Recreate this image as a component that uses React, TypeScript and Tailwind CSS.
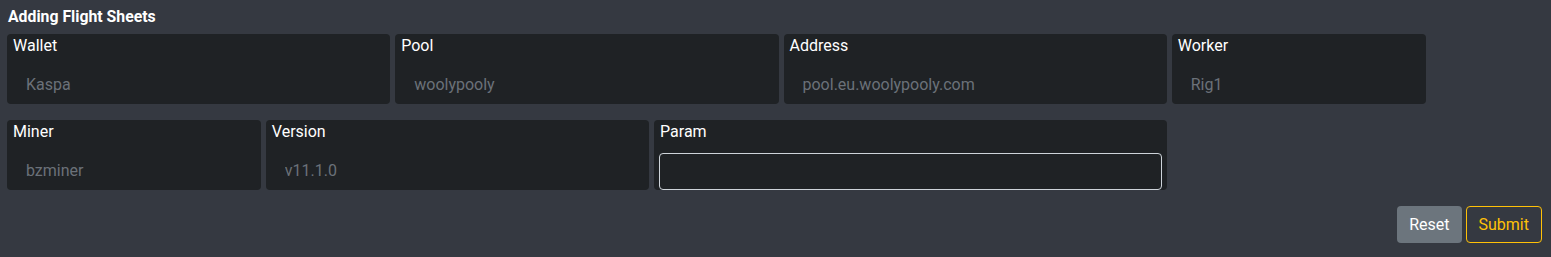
import React from 'react'

type Field = {
  label: string
  value?: string
  span: string
  editable?: boolean
}

const rowOne: Field[] = [
  { label: 'Wallet', value: 'Kaspa', span: 'col-span-3' },
  { label: 'Pool', value: 'woolypooly', span: 'col-span-3' },
  { label: 'Address', value: 'pool.eu.woolypooly.com', span: 'col-span-3' },
  { label: 'Worker', value: 'Rig1', span: 'col-span-2' },
]

const rowTwo: Field[] = [
  { label: 'Miner', value: 'bzminer', span: 'col-span-2' },
  { label: 'Version', value: 'v11.1.0', span: 'col-span-3' },
  { label: 'Param', span: 'col-span-4', editable: true },
]

const FieldCard = ({ field }: { field: Field }) => {
  return (
    <div className={`${field.span} bg-[#1f2225] rounded-[4px] flex flex-col h-[70px] pt-[1px] px-[5px]`}>
      <label className="text-white text-[16px] leading-[22px] pl-[1px]">{field.label}</label>
      <div className="mt-auto">
        {field.editable ? (
          <input
            className="w-full h-[37px] rounded-[4px] border border-[#ced4da] bg-transparent text-white px-3 text-[16px] outline-none"
            defaultValue=""
          />
        ) : (
          <input
            className="w-full h-[37px] rounded-[4px] border border-transparent bg-transparent text-[#6b7179] pl-[13px] pr-3 pb-[2px] text-[16px] outline-none"
            value={field.value}
            disabled
            readOnly
          />
        )}
      </div>
    </div>
  )
}

export default function App() {
  return (
    <div
      className="w-full h-[257px] bg-[#353941] pl-[7px] pt-[5px] overflow-hidden"
      style={{ fontFamily: 'Roboto, "Liberation Sans", sans-serif' }}>
      <h3 className="text-white font-bold text-[15.8px] leading-[24px] pl-[1px]">Adding Flight Sheets</h3>
      <div className="w-[1548px] grid grid-cols-12 gap-x-[5px] mt-[5px]">
        {rowOne.map((f) => (
          <FieldCard key={f.label} field={f} />
        ))}
      </div>
      <div className="w-[1548px] grid grid-cols-12 gap-x-[5px] mt-[16px]">
        {rowTwo.map((f) => (
          <FieldCard key={f.label} field={f} />
        ))}
      </div>
      <div className="flex justify-end gap-[4px] mt-[16px] pr-[9px]">
        <button className="h-[37px] px-[12px] rounded-[4px] bg-[#6c757d] text-white text-[16px]">Reset</button>
        <button className="h-[37px] px-[12px] rounded-[4px] border border-[#ffc107] text-[#ffc107] text-[16px]">
          Submit
        </button>
      </div>
    </div>
  )
}
